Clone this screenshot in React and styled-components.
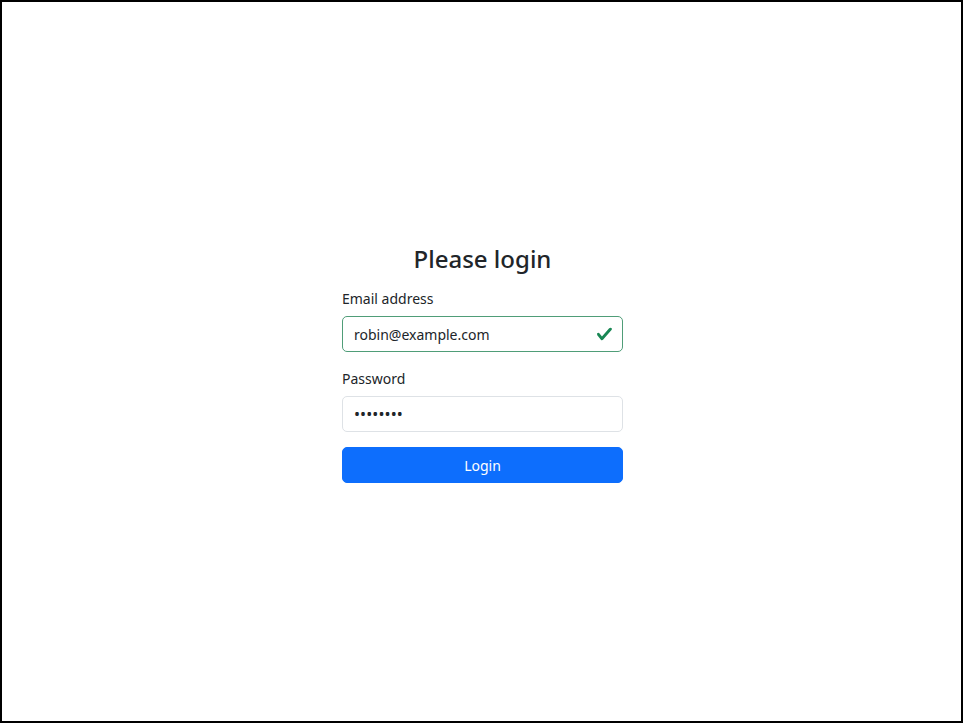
import React from 'react'
import styled, { createGlobalStyle } from 'styled-components'

const GlobalStyle = createGlobalStyle`
  html, body {
    margin: 0;
    padding: 0;
    background: #fff;
  }
  * {
    box-sizing: border-box;
  }
`

const Frame = styled.div`
  width: 963px;
  height: 723px;
  border: 2px solid #000;
  display: flex;
  align-items: center;
  justify-content: center;
  font-family: "Noto Sans", "Open Sans", sans-serif;
  color: #212529;
`

const Form = styled.form`
  width: 281px;
  display: flex;
  flex-direction: column;
  margin: 4px 0 0 2px;
`

const Title = styled.h3`
  margin: 0 0 15px;
  font-size: 24px;
  font-weight: 500;
  line-height: 29px;
  text-align: center;
`

const Group = styled.div`
  display: flex;
  flex-direction: column;
  margin-bottom: ${p => p.$gap || 16}px;
`

const Label = styled.label`
  font-size: 14px;
  line-height: 22px;
  margin-bottom: 6px;
`

const Field = styled.div`
  position: relative;
`

const Input = styled.input`
  width: 100%;
  height: 36px;
  padding: 0 36px 0 11px;
  font-family: inherit;
  font-size: ${p => (p.type === 'password' ? 16 : 14)}px;
  letter-spacing: ${p => (p.type === 'password' ? 0.1 : 0)}px;
  color: #212529;
  background: #fff;
  border: 1px solid ${p => (p.$valid ? '#4f9d78' : '#dee2e6')};
  border-radius: 5px;
  outline: none;
`

const Check = styled.svg`
  position: absolute;
  right: 10px;
  top: 50%;
  width: 17px;
  height: 17px;
  transform: translateY(-50%);
`

const Button = styled.button`
  height: 36px;
  border: 1px solid #0d6efd;
  border-radius: 5px;
  background: #0d6efd;
  color: #fff;
  font-family: inherit;
  font-size: 14px;
  line-height: 1;
  padding: 2px 0 0;
  cursor: pointer;
`

export default function App() {
  return (
    <>
      <GlobalStyle />
      <Frame>
        <Form onSubmit={e => e.preventDefault()}>
          <Title>Please login</Title>
          <Group>
            <Label htmlFor="email">Email address</Label>
            <Field>
              <Input id="email" type="email" $valid defaultValue="robin@example.com" />
              <Check viewBox="0 0 8 8">
                <path
                  fill="#198754"
                  d="M2.3 6.73.6 4.53c-.4-1.04.46-1.4 1.1-.8l1.1 1.4 3.4-3.8c.6-.63 1.6-.27 1.2.7l-4 4.6c-.43.5-.8.4-1.1.1z"
                />
              </Check>
            </Field>
          </Group>
          <Group $gap={15}>
            <Label htmlFor="password">Password</Label>
            <Input id="password" type="password" defaultValue="password" />
          </Group>
          <Button type="submit">Login</Button>
        </Form>
      </Frame>
    </>
  )
}
